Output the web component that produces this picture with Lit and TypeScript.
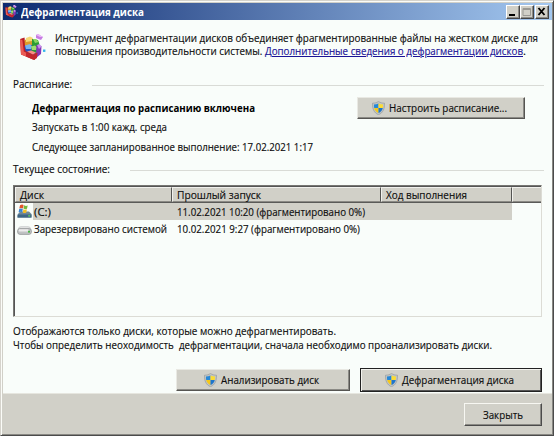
import { LitElement, html, svg, css } from "lit";
import { customElement, property } from "lit/decorators.js";

/** One line of text, condensed or widened to fill the given width. */
@customElement("fit-label")
class FitLabel extends LitElement {
  @property({ type: Number }) width = 0;
  @property() text = "";
  static styles = css`
    :host { display: block; white-space: pre; flex: none; }
    span { display: inline-block; transform-origin: 0 50%; text-decoration: inherit; text-underline-offset: inherit; }
  `;
  render() { return html`<span>${this.text}</span>`; }
  updated() {
    const span = this.renderRoot.querySelector("span")!;
    span.style.transform = "none";
    const natural = span.getBoundingClientRect().width;
    span.style.transform = `scaleX(${this.width / natural})`;
    this.style.width = this.width + "px";
  }
}

const label = (text: string, width: number, cls = "") =>
  html`<fit-label class=${cls} .text=${text} .width=${width}></fit-label>`;

const cubes = svg`
  <path d="M4.5 7 L13 5 L20 9 L20 20 L14 22 L5 19 Z" fill="#5c4a86"/>
  <path d="M1 5 L5.5 3.5 L7 17 L15 21 L16 26 L2 20.5 Z" fill="#b81f26"/>
  <path d="M1 5 L3.4 6.2 L4.8 17.5 L14 22 L14 25.5 L2 20.5 Z" fill="#ea5b54"/>
  <path d="M5.5 6 L13 4 L13 11 L6 12 Z" fill="#dd9a2a"/>
  <path d="M7 4 L11 2.5 L14 4 L13 7 L7 8 Z" fill="#f7d876"/>
  <path d="M13 5 L19 6 L21 12 L13 12 Z" fill="#2c9c35"/>
  <path d="M14 5 L17 5 L20 8 L16 9 Z" fill="#8cd860"/>
  <path d="M5.5 12 L12.5 11 L12.5 19 L6.5 17 Z" fill="#2256c4"/>
  <path d="M6 11.5 L11 10 L13 12.5 L12 15 L7 15 Z" fill="#78b4f2"/>
  <path d="M12.5 13 L18 13 L18 19 L12.5 19 Z" fill="#2d983a"/>
  <path d="M12 12.5 L16 11.5 L18 13.5 L17 16 L13 16 Z" fill="#a0df70"/>
  <path d="M17.5 11 L22.5 12 L22 20 L17 24 Z" fill="#8439b8"/>
  <path d="M18 11 L20.5 10 L22.5 12.5 L20 15 Z" fill="#ca90ec"/>
  <path d="M7 18 L14 20.5 L18.5 18.5 L18 24 L15 26 L7 22.5 Z" fill="#c1272e"/>
  <path d="M8 17.5 L12 16.5 L17 18.5 L14 20.5 Z" fill="#f78f84"/>
  <path d="M17 1 L19 0 L24 3 L22 6 L17 4 Z" fill="#c57be2"/>
  <path d="M17 1 L19 0 L24 3 L21 3 Z" fill="#eab8f7"/>
  <rect x="24" y="15.5" width="2.4" height="2.4" fill="#35b5ee"/>`;

const shield = html`<svg class="shield" viewBox="0 0 13 14">
  <path d="M6.5 .4 C8.2 1.7 10.2 2.1 12.5 2.2 C12.7 8 11 11.9 6.5 13.7 C2 11.9 .3 8 .5 2.2 C2.8 2.1 4.8 1.7 6.5 .4Z" fill="#bfc3c4" stroke="#8f9699" stroke-width=".6"/>
  <path d="M6.5 2.4 V7 H2.2 Q1.9 5 2 3.6 Q4.5 3.5 6.5 2.4Z" fill="#2588d8"/>
  <path d="M6.5 2.4 V7 H10.8 Q11.1 5 11 3.6 Q8.5 3.5 6.5 2.4Z" fill="#fbdc35"/>
  <path d="M2.2 7 H6.5 V12 Q3 10.6 2.2 7Z" fill="#f6c818"/>
  <path d="M10.8 7 H6.5 V12 Q10 10.6 10.8 7Z" fill="#1d75cc"/>
</svg>`;

const systemDrive = html`<svg class="drive sys" viewBox="0 0 15 15">
  <path d="M1 10 L3 7.5 H12 L14.5 10 V13.5 H.5Z" fill="#6f8798"/>
  <path d="M.5 10.5 H14.5 V13.6 H.5Z" fill="#3e6584"/>
  <path d="M3 1.3 Q5 0 6.6 1 L6 4.4 Q4.3 3.5 2.3 4.6Z" fill="#e2552b"/>
  <path d="M7.1 1.3 Q9 2.4 10.7 1.4 L10 4.8 Q8.3 5.6 6.5 4.6Z" fill="#76b93b"/>
  <path d="M2.2 5.1 Q4.2 4 5.8 5 L5.2 8.3 Q3.4 7.3 1.6 8.3Z" fill="#3684d4"/>
  <path d="M6.4 5.2 Q8.2 6.2 9.9 5.3 L9.3 8.6 Q7.5 9.6 5.7 8.6Z" fill="#f1bd29"/>
  <rect x="11.2" y="11.3" width="2" height="1.2" fill="#63df58"/>
</svg>`;

const drive = html`<svg class="drive" viewBox="0 0 15 15">
  <path d="M1 8.5 Q1.5 5.6 4 5.6 H11 Q13.5 5.6 14 8.5Z" fill="#e2e3e3" stroke="#c0c3c3" stroke-width=".6"/>
  <rect x=".6" y="7.6" width="13.8" height="5.8" rx="2.4" fill="#c0c2c3" stroke="#8d9191" stroke-width=".7"/>
  <rect x="1.6" y="8.3" width="10" height="2.2" rx="1" fill="#ececec"/>
  <rect x="11" y="9.8" width="2" height="1.8" fill="#45b841"/>
</svg>`;

@customElement("app-root")
class AppRoot extends LitElement {
  static styles = css`
    :host { display: block; font: 11.3px/14px "Open Sans", "Noto Sans", sans-serif; color: #0c0c0c; -webkit-text-stroke: .15px; }
    * { box-sizing: border-box; }
    .window { width: 554px; height: 436px; display: flex; flex-direction: column; background: #d1d0c8;
      border: 1px solid; border-color: #d5d3cc #4b4b4b #4b4b4b #d5d3cc; padding: 2px 1px 1px 2px;
      box-shadow: inset 1px 1px #fbfcf8, inset -1px -1px #898883; overflow: hidden; }
    .title { height: 17px; flex: none; display: flex; align-items: center; color: #fff; font-weight: 700; font-size: 11px;
      -webkit-text-stroke: 0; background: linear-gradient(90deg, #0d2a70, #a4c8f0); padding: 0 3px 0 2px; }
    .title .cubes { width: 13px; height: 13px; margin-right: 3px; }
    .controls { margin-left: auto; display: flex; }
    .ctl { width: 14px; height: 14px; background: #d1d0c8; border: 1px solid; border-color: #fff #444 #444 #fff;
      box-shadow: inset -1px -1px #8c8b86; }
    .ctl svg { display: block; width: 12px; height: 12px; }
    .ctl.x { margin-left: 1px; }
    .body { height: 373px; flex: none; background: #f9fdfa; padding: 11px 10px 0 10px; }
    .intro { display: flex; height: 46px; }
    .intro .cubes { width: 27px; height: 27px; margin: 3px 0 0 6px; flex: none; }
    .intro div { margin: 0 0 0 9px; display: flex; flex-direction: column; }
    .line { display: flex; height: 13px; line-height: 13px; }
    .link { color: #1b1396; text-decoration: underline; text-underline-offset: 1px; }
    .group { display: flex; height: 14px; align-items: center; gap: 20px; margin-right: -2px; }
    .group::after { content: ""; flex: 1; height: 1px; margin-top: 2px; background: #d9dbd6; }
    .schedule { display: flex; height: 71px; justify-content: space-between; padding: 0 17px 0 19px; }
    .info { display: flex; flex-direction: column; padding-top: 10px; }
    .info > * { height: 14px; }
    .bold { font-weight: 700; color: #000; font-size: 11px; -webkit-text-stroke: 0; }
    .run { margin-top: 5px; }
    .next { margin-top: 6px; }
    .btn { display: flex; align-items: center; justify-content: center; flex: none; height: 22px;
      background: #d1d0c8; border: 1px solid; border-color: #e9e9e3 #565552 #565552 #e9e9e3;
      box-shadow: inset -1px -1px #8b8a85; }
    .shield { width: 13px; height: 14px; margin-right: 4px; flex: none; }
    .setup { width: 168px; margin-top: 6px; padding-right: 3px; }
    .list { width: 529px; height: 132px; margin-top: 9px; border: 1px solid; border-color: #777773 #dcdcd5 #dcdcd5 #777773;
      box-shadow: inset 1px 1px #555; padding: 1px 0 0 1px; }
    .row { display: grid; grid-template-columns: 157px 209px 131px 1fr; height: 17px; align-items: center; }
    .head { height: 16px; border-bottom: 1px solid #5a5a58; background: #d1d0c8; align-items: stretch; }
    .head > div { border: 1px solid; border-color: #f1f1ed #545452 #8b8a85 #f1f1ed; padding-left: 4px; line-height: 13px; }
    .head > div:last-child { border-right: 0; }
    .first { display: flex; align-items: center; padding-left: 2px; gap: 2px; }
    .date { padding-left: 5px; }
    .sel { background: linear-gradient(90deg, transparent 18px, #d1d0c8 18px, #d1d0c8 497px, transparent 497px); }
    .drive { width: 15px; height: 15px; flex: none; }
    .note { margin-top: 7px; height: 44px; }
    .note > div { height: 14px; }
    .actions { display: flex; gap: 10px; justify-content: flex-end; align-items: center; height: 24px; }
    .analyze { width: 174px; padding-right: 3px; }
    .defrag { width: 182px; height: 24px; border-color: #222; box-shadow: inset 1px 1px #f3f3ee, inset -1px -1px #555; padding-right: 3px; }
    .foot { flex: 1; border-top: 1px solid #e6e6df; display: flex; justify-content: flex-end; align-items: flex-start; padding: 9px 10px 0 0; }
    .close { width: 78px; height: 23px; border-color: #f7f7f2 #4b4b4b #4b4b4b #f7f7f2; }
  `;

  render() {
    return html`<div class="window">
      <div class="title">
        <svg class="cubes" viewBox="0 0 27 27">${cubes}</svg>${label("Дефрагментация диска", 123)}
        <div class="controls">
          <div class="ctl"><svg viewBox="0 0 12 12"><path d="M2 8h6v2h-6z" fill="#000"/></svg></div>
          <div class="ctl"><svg viewBox="0 0 12 12"><path d="M2 2.5h7.5v7h-7.5z M2 3.5h7.5" fill="none" stroke="#9a9994"/></svg></div>
          <div class="ctl x"><svg viewBox="0 0 12 12"><path d="M2.5 2l6 7M8.5 2l-6 7" stroke="#000" stroke-width="1.9"/></svg></div>
        </div>
      </div>
      <div class="body">
        <div class="intro">
          <svg class="cubes" viewBox="0 0 27 27">${cubes}</svg>
          <div>
            <span class="line">${label("Инструмент дефрагментации дисков объединяет фрагментированные файлы на жестком диске для", 483)}</span>
            <span class="line">${label("повышения производительности системы. ", 210)}${label("Дополнительные сведения о дефрагментации дисков", 258, "link")}.</span>
          </div>
        </div>
        <div class="group">${label("Расписание:", 59)}</div>
        <div class="schedule">
          <div class="info">
            <div class="bold">${label("Дефрагментация по расписанию включена", 223)}</div>
            <div class="run">${label("Запускать в 1:00 кажд. среда", 135)}</div>
            <div class="next">${label("Следующее запланированное выполнение: 17.02.2021 1:17", 281)}</div>
          </div>
          <div class="btn setup">${shield}${label("Настроить расписание...", 118)}</div>
        </div>
        <div class="group">${label("Текущее состояние:", 97)}</div>
        <div class="list">
          <div class="row head">
            <div>${label("Диск", 24)}</div><div>${label("Прошлый запуск", 84)}</div><div>${label("Ход выполнения", 81)}</div><div></div>
          </div>
          <div class="row sel">
            <div class="first">${systemDrive}${label("(C:)", 17)}</div>
            <div class="date">${label("11.02.2021 10:20 (фрагментировано 0%)", 188)}</div>
          </div>
          <div class="row">
            <div class="first">${drive}${label("Зарезервировано системой", 133)}</div>
            <div class="date">${label("10.02.2021 9:27 (фрагментировано 0%)", 183)}</div>
          </div>
        </div>
        <div class="note">
          <div>${label("Отображаются только диски, которые можно дефрагментировать.", 323)}</div>
          <div>${label("Чтобы определить неоходимость  дефрагментации, сначала необходимо проанализировать диски.", 479)}</div>
        </div>
        <div class="actions">
          <div class="btn analyze">${shield}${label("Анализировать диск", 98)}</div>
          <div class="btn defrag">${shield}${label("Дефрагментация диска", 112)}</div>
        </div>
      </div>
      <div class="foot"><div class="btn close">${label("Закрыть", 40)}</div></div>
    </div>`;
  }
}
